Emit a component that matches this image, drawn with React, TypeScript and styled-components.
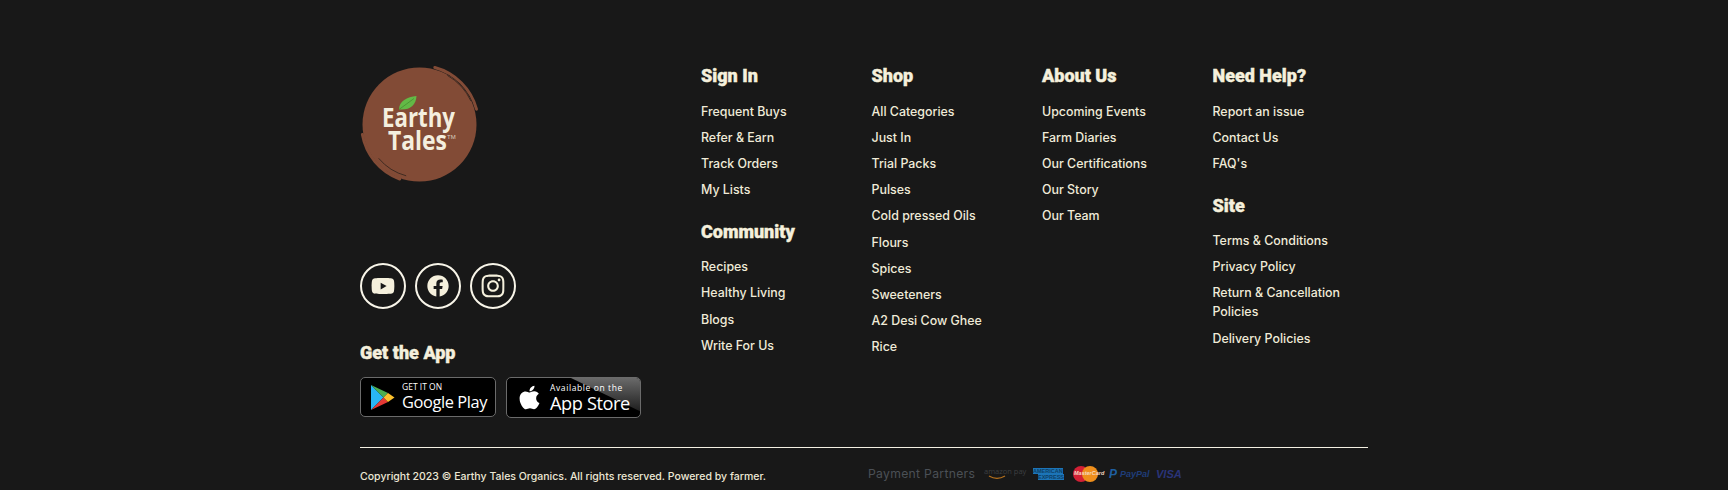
import React from 'react';
import styled, { createGlobalStyle } from 'styled-components';
import { FaApple, FaFacebook, FaInstagram, FaYoutube } from 'react-icons/fa';

const columns = [
  [
    { title: 'Sign In', links: ['Frequent Buys', 'Refer & Earn', 'Track Orders', 'My Lists'] },
    { title: 'Community', links: ['Recipes', 'Healthy Living', 'Blogs', 'Write For Us'] },
  ],
  [
    {
      title: 'Shop',
      links: [
        'All Categories',
        'Just In',
        'Trial Packs',
        'Pulses',
        'Cold pressed Oils',
        'Flours',
        'Spices',
        'Sweeteners',
        'A2 Desi Cow Ghee',
        'Rice',
      ],
    },
  ],
  [
    {
      title: 'About Us',
      links: ['Upcoming Events', 'Farm Diaries', 'Our Certifications', 'Our Story', 'Our Team'],
    },
  ],
  [
    { title: 'Need Help?', links: ['Report an issue', 'Contact Us', "FAQ's"] },
    {
      title: 'Site',
      links: ['Terms & Conditions', 'Privacy Policy', 'Return & Cancellation Policies', 'Delivery Policies'],
    },
  ],
];

const Logo = () => (
  <svg width="120" height="120" viewBox="0 0 120 120">
    <circle cx="59.5" cy="60.5" r="57" fill="#824b36" />
    <g fill="none" stroke="#824b36" strokeLinecap="round">
      <path d="M74.8 3.5A59 59 0 0 1 116.5 45.2" strokeWidth="3" />
      <path d="M2.4 70.6A58 58 0 0 0 39.7 115" strokeWidth="3" />
    </g>
    <g fill="none" stroke="#2e221c" strokeLinecap="round">
      <path d="M87.7 11.6A56.5 56.5 0 0 1 110.7 36.6" strokeWidth="0.8" />
      <path d="M18.9 94.6A53 53 0 0 0 45.8 111.7" strokeWidth="0.8" />
    </g>
    <path d="M39 45.5C39 37 47 33 56.5 32C56 41 50 46.5 39 45.5Z" fill="#63b946" />
    <path d="M39 45.5C44 42 49 38 54 34.5" stroke="#3f8a2c" strokeWidth="0.7" fill="none" />
    <LogoWord x="22" y="63" textLength="73" lengthAdjust="spacingAndGlyphs">
      Earthy
    </LogoWord>
    <LogoWord x="28" y="86" textLength="59" lengthAdjust="spacingAndGlyphs">
      Tales
    </LogoWord>
    <LogoMark x="87" y="75">
      TM
    </LogoMark>
  </svg>
);

const PlayIcon = () => (
  <svg width="25" height="27" viewBox="0 0 25 27">
    <path d="M1 1L1 26L13.5 13.5Z" fill="#29b6f6" />
    <path d="M1 1L13.5 13.5L18 9Z" fill="#4caf50" />
    <path d="M1 26L13.5 13.5L18 18Z" fill="#e53935" />
    <path d="M18 9L24.5 13.5L18 18L13.5 13.5Z" fill="#fbc02d" />
  </svg>
);

const App = () => {
  return (
    <>
      <GlobalStyle />
      <Footer>
        <TopRow>
          <Brand>
            <Logo />
            <Socials>
              <SocialLink>
                <FaYoutube size={24} />
              </SocialLink>
              <SocialLink>
                <FaFacebook size={22} />
              </SocialLink>
              <SocialLink>
                <FaInstagram size={26} />
              </SocialLink>
            </Socials>
            <AppTitle>Get the App</AppTitle>
            <Badges>
              <Badge>
                <PlayIcon />
                <BadgeText>
                  <BadgeSmall>GET IT ON</BadgeSmall>
                  <BadgeLarge>Google Play</BadgeLarge>
                </BadgeText>
              </Badge>
              <AppleBadge>
                <FaApple size={27} />
                <BadgeText>
                  <BadgeSmall $spaced>Available on the</BadgeSmall>
                  <BadgeLarge $big>App Store</BadgeLarge>
                </BadgeText>
              </AppleBadge>
            </Badges>
          </Brand>
          <LinkGrid>
            {columns.map((sections, i) => (
              <Column key={i}>
                {sections.map((section) => (
                  <Section key={section.title}>
                    <Heading>{section.title}</Heading>
                    {section.links.map((link) => (
                      <LinkItem key={link}>{link}</LinkItem>
                    ))}
                  </Section>
                ))}
              </Column>
            ))}
          </LinkGrid>
        </TopRow>
        <Divider />
        <BottomRow>
          <Copyright>Copyright 2023 © Earthy Tales Organics. All rights reserved. Powered by farmer.</Copyright>
          <Payments>
            <PaymentLabel>Payment Partners</PaymentLabel>
            <AmazonPay>
              amazon pay
              <svg width="18" height="5" viewBox="0 0 18 5">
                <path d="M1 1C6 4 12 4 17 1" stroke="#b5701d" strokeWidth="1.2" fill="none" />
              </svg>
            </AmazonPay>
            <Amex>
              <AmexBar>AMERICAN</AmexBar>
              <AmexBar $end>EXPRESS</AmexBar>
            </Amex>
            <MasterCard>
              <MasterCircle $color="#d32035" />
              <MasterCircle $color="#ef8f1c" $overlap />
              <MasterLabel>MasterCard</MasterLabel>
            </MasterCard>
            <PayPal>
              <PayPalMark>P</PayPalMark>
              PayPal
            </PayPal>
            <Visa>VISA</Visa>
          </Payments>
        </BottomRow>
      </Footer>
    </>
  );
};

export default App;

const GlobalStyle = createGlobalStyle`
  html, body {
    margin: 0;
    background: #181818;
  }
  body {
    font-family: Inter, "Noto Sans", sans-serif;
    overflow: hidden;
  }
`;

const Footer = styled.footer`
  box-sizing: border-box;
  width: 1008px;
  height: 490px;
  margin: 0 auto;
  padding-top: 64px;
  color: #f5f0dc;
`;

const TopRow = styled.div`
  display: flex;
  height: 354px;
`;

const Brand = styled.div`
  width: 341px;
  flex: none;
  display: flex;
  flex-direction: column;
  align-items: flex-start;
`;

const LogoWord = styled.text`
  font-family: 'Open Sans', sans-serif;
  font-size: 27px;
  font-weight: 700;
  fill: #f4efdf;
`;

const LogoMark = styled.text`
  font-family: 'Liberation Sans', sans-serif;
  font-size: 6px;
  fill: #d9cdbf;
`;

const Socials = styled.div`
  display: flex;
  gap: 9px;
  margin-top: 79px;
`;

const SocialLink = styled.a`
  box-sizing: border-box;
  width: 46px;
  height: 46px;
  border: 2px solid #f8f5e9;
  border-radius: 50%;
  display: flex;
  align-items: center;
  justify-content: center;
  color: #f5f0dc;
`;

const AppTitle = styled.h4`
  margin: 33px 0 0;
  font-family: Roboto, sans-serif;
  font-size: 18px;
  line-height: 22px;
  font-weight: 900;
  -webkit-text-stroke: 0.4px #f5f0dc;
`;

const Badges = styled.div`
  display: flex;
  gap: 10px;
  margin-top: 13px;
`;

const Badge = styled.a`
  box-sizing: border-box;
  position: relative;
  width: 136px;
  height: 40px;
  padding-left: 9px;
  display: flex;
  align-items: center;
  gap: 7px;
  background: #000;
  border: 1px solid #6b6b6b;
  border-radius: 5px;
  color: #fff;
  overflow: hidden;
`;

const AppleBadge = styled(Badge)`
  width: 135px;
  height: 41px;

  &::before {
    content: '';
    position: absolute;
    inset: 0 0 0 64px;
    background: linear-gradient(180deg, #6a6a6a, #111);
    clip-path: polygon(0 0, 100% 0, 100% 85%);
  }

  & > * {
    position: relative;
  }
`;

const BadgeText = styled.div`
  display: flex;
  flex-direction: column;
`;

const BadgeSmall = styled.span<{ $spaced?: boolean }>`
  font-family: 'Open Sans', sans-serif;
  font-size: 8.5px;
  line-height: 10px;
  letter-spacing: ${(p) => (p.$spaced ? '0.6px' : '0')};
  font-weight: 500;
`;

const BadgeLarge = styled.span<{ $big?: boolean }>`
  font-family: 'Open Sans', sans-serif;
  font-size: ${(p) => (p.$big ? '18.2px' : '16.4px')};
  line-height: 20px;
  letter-spacing: -0.4px;
  white-space: nowrap;
`;

const LinkGrid = styled.div`
  flex: 1;
  display: grid;
  grid-template-columns: repeat(4, 154.5px);
  column-gap: 16px;
  align-content: start;
  padding-top: 1.2px;
`;

const Column = styled.div`
  display: flex;
  flex-direction: column;
  gap: 14.5px;
`;

const Section = styled.div`
  display: flex;
  flex-direction: column;
`;

const Heading = styled.h4`
  margin: 0 0 14.4px;
  font-family: Roboto, sans-serif;
  font-size: 18px;
  line-height: 22px;
  font-weight: 900;
  -webkit-text-stroke: 0.4px #f5f0dc;
`;

const LinkItem = styled.a`
  margin-bottom: 7.2px;
  font-size: 12.4px;
  line-height: 19px;
  font-weight: 500;
  color: #f0ebd8;
`;

const Divider = styled.div`
  margin-top: 29px;
  height: 1px;
  background: #f3f0e2;
`;

const BottomRow = styled.div`
  display: flex;
  align-items: center;
  height: 56px;
`;

const Copyright = styled.p`
  width: 508px;
  flex: none;
  margin: 0;
  font-size: 10.54px;
  font-weight: 500;
  color: #ece7d4;
`;

const Payments = styled.div`
  display: flex;
  align-items: center;
  margin-top: -5px;
`;

const PaymentLabel = styled.span`
  width: 116px;
  font-size: 12.2px;
  letter-spacing: 0.3px;
  color: #4b5056;
`;

const AmazonPay = styled.span`
  width: 49px;
  display: flex;
  flex-direction: column;
  font-family: 'Open Sans', sans-serif;
  font-size: 7.5px;
  line-height: 8px;
  color: #3d3f41;

  svg {
    margin-left: 4px;
    display: block;
  }
`;

const Amex = styled.span`
  width: 31px;
  margin-right: 9px;
  display: flex;
  flex-direction: column;
`;

const AmexBar = styled.span<{ $end?: boolean }>`
  align-self: ${(p) => (p.$end ? 'flex-end' : 'flex-start')};
  font-family: 'Liberation Sans', sans-serif;
  font-size: 5.5px;
  line-height: 6px;
  font-weight: 700;
  color: #0e3f66;
  background: #1c75b8;
`;

const MasterCard = styled.span`
  position: relative;
  width: 36px;
  height: 16px;
  display: flex;
`;

const MasterCircle = styled.i<{ $color: string; $overlap?: boolean }>`
  width: 16px;
  height: 16px;
  border-radius: 50%;
  background: ${(p) => p.$color};
  margin-left: ${(p) => (p.$overlap ? '-7px' : '0')};
`;

const MasterLabel = styled.span`
  position: absolute;
  left: 1px;
  top: 4px;
  font-family: 'Liberation Sans', sans-serif;
  font-size: 5.5px;
  font-weight: 700;
  font-style: italic;
  color: #f6d9c0;
`;

const PayPal = styled.span`
  width: 47px;
  display: flex;
  align-items: center;
  gap: 3px;
  font-family: 'Liberation Sans', sans-serif;
  font-size: 9px;
  font-weight: 700;
  font-style: italic;
  color: #1f3d78;
`;

const PayPalMark = styled.b`
  font-size: 12px;
  color: #1f5fa0;
`;

const Visa = styled.span`
  font-family: 'Liberation Sans', sans-serif;
  font-size: 11px;
  font-weight: 700;
  font-style: italic;
  color: #2a3478;
`;
